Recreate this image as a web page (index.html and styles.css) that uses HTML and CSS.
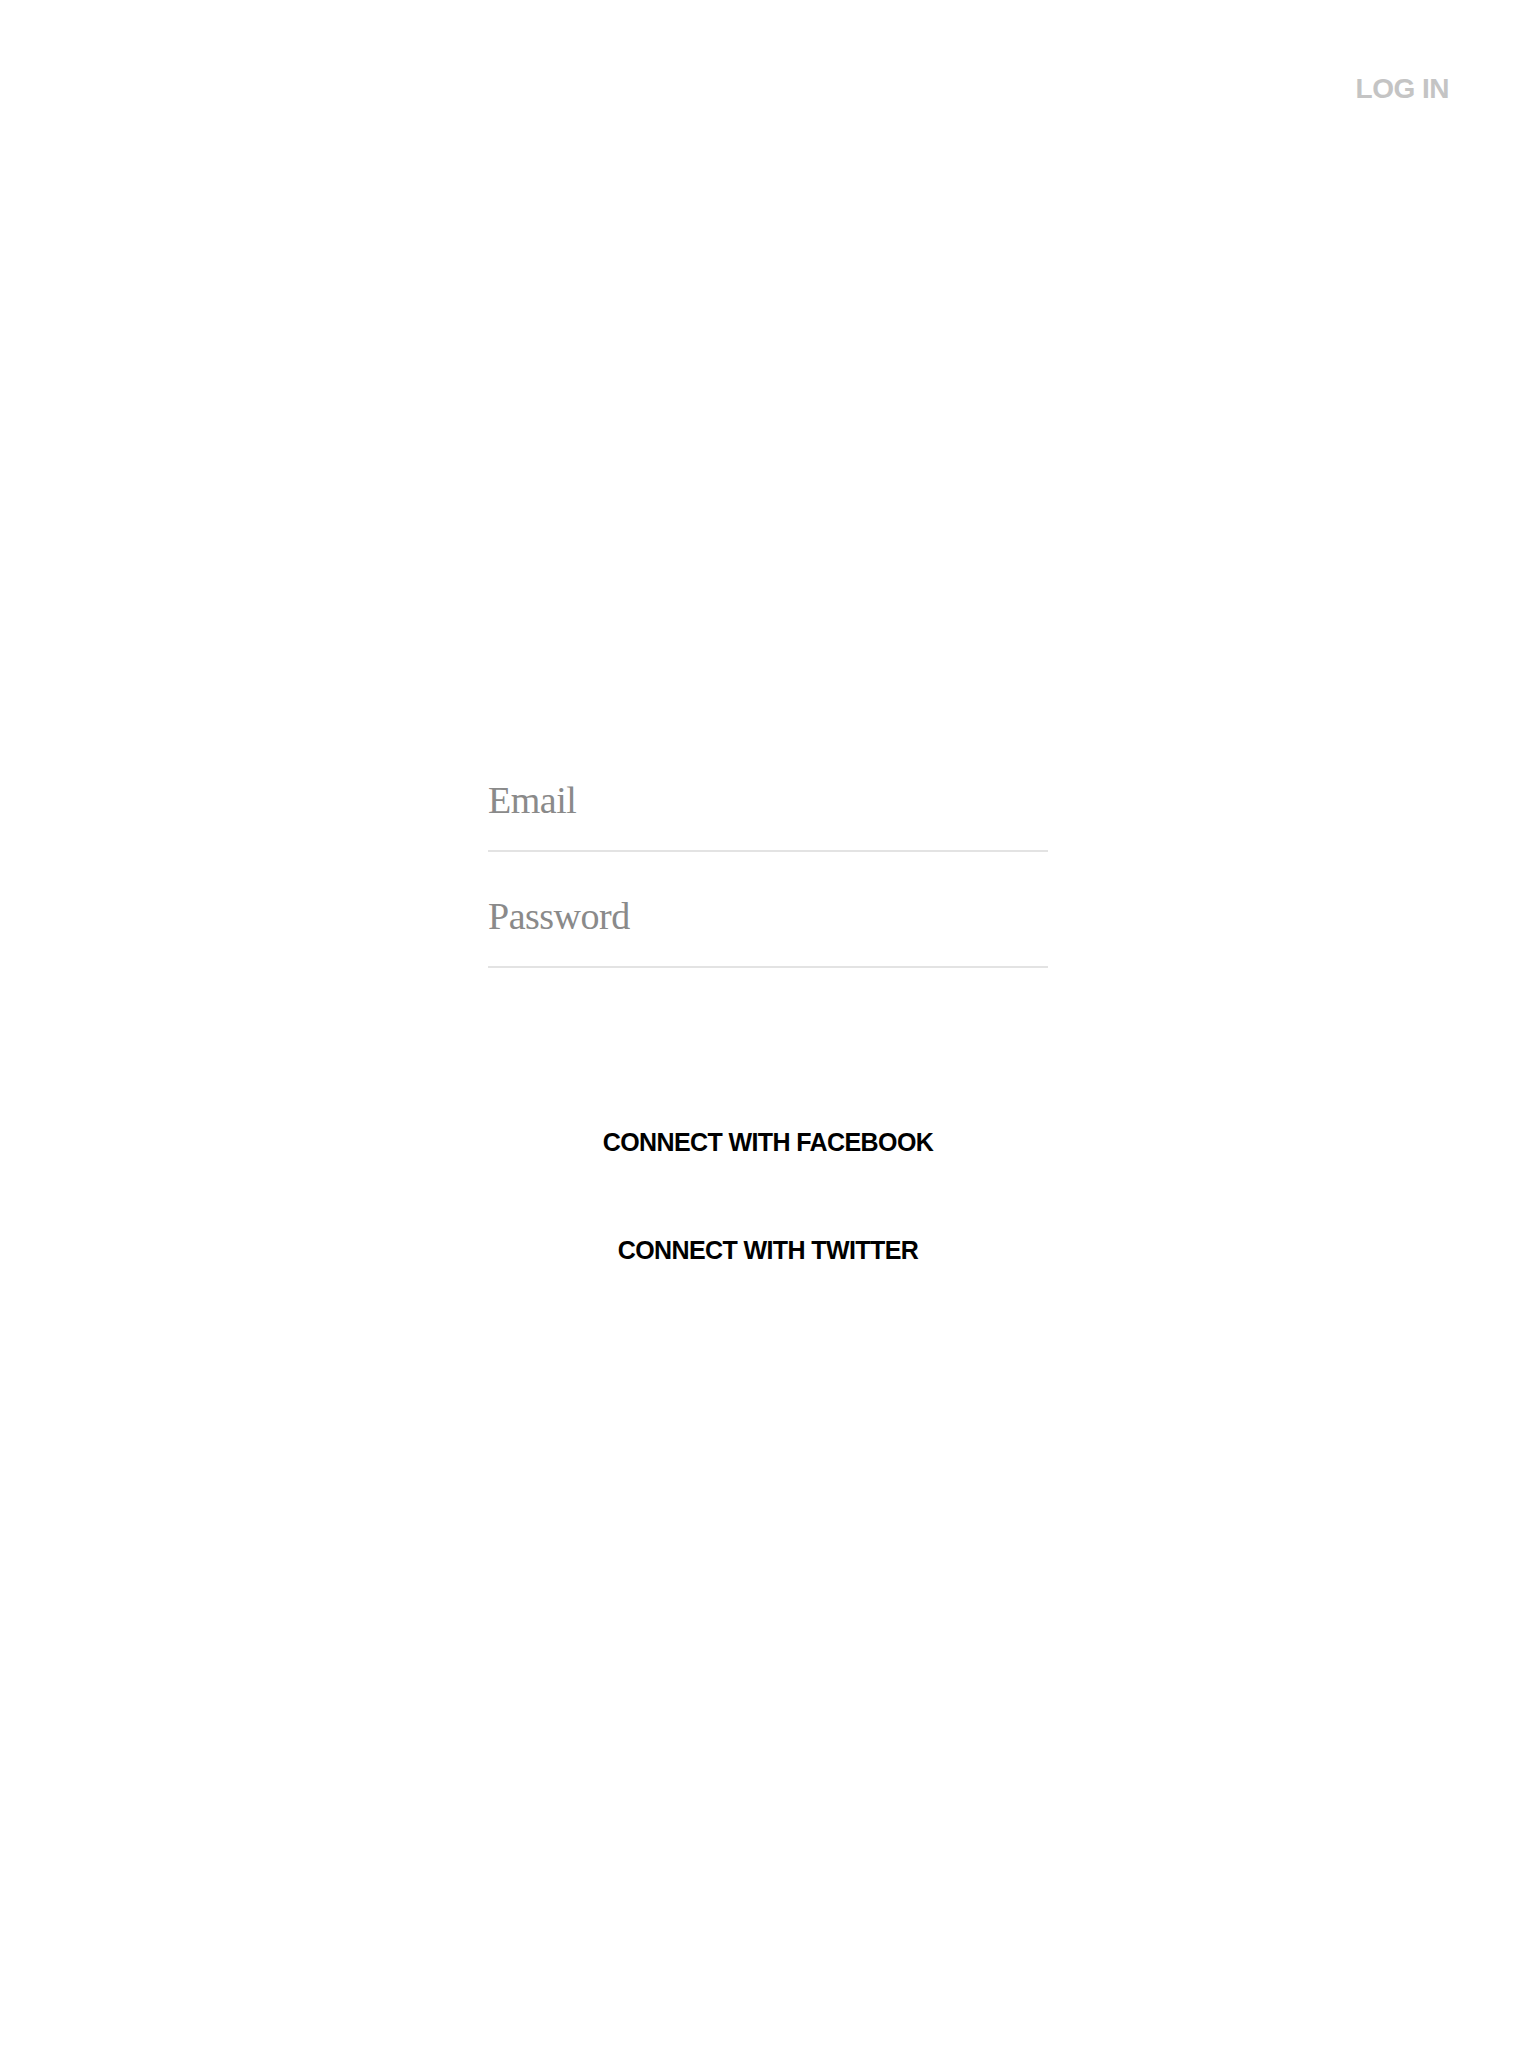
FILE: index.html
```html
<!DOCTYPE html>
<html lang="en">
<head>
<meta charset="utf-8">
<title>Log in</title>
<link rel="stylesheet" href="styles.css">
</head>
<body>
<header class="topbar">
  <a class="login-link" href="#">LOG IN</a>
</header>
<main class="content">
  <form class="login-form">
    <div class="field"><span class="placeholder">Email</span></div>
    <div class="field"><span class="placeholder">Password</span></div>
  </form>
  <nav class="social">
    <a class="social-link" href="#">CONNECT WITH FACEBOOK</a>
    <a class="social-link" href="#">CONNECT WITH TWITTER</a>
  </nav>
</main>
</body>
</html>
```
FILE: styles.css
```css
html, body {
  margin: 0;
  padding: 0;
  background: #ffffff;
}
body {
  width: 1536px;
  min-height: 2048px;
}
.topbar {
  display: flex;
  justify-content: flex-end;
  padding: 75px 87px 0 0;
}
.login-link {
  font-family: "Liberation Sans", Arial, sans-serif;
  font-weight: 700;
  font-size: 28px;
  line-height: 28px;
  letter-spacing: -0.5px;
  color: #c4c4c4;
  text-decoration: none;
}
.content {
  display: flex;
  flex-direction: column;
  align-items: center;
  margin-top: 633px;
}
.login-form {
  width: 560px;
  display: flex;
  flex-direction: column;
}
.field {
  padding: 45px 0 31px 0;
  border-bottom: 2px solid #e3e3e3;
  height: 38px;
}
.placeholder {
  display: block;
  font-family: "Liberation Serif", "Times New Roman", serif;
  font-size: 38px;
  line-height: 38px;
  letter-spacing: -0.5px;
  color: #8a8a8a;
}
.social {
  display: flex;
  flex-direction: column;
  align-items: center;
  gap: 83px;
  margin-top: 162px;
}
.social-link {
  font-family: "Liberation Sans", Arial, sans-serif;
  font-weight: 700;
  font-size: 25px;
  line-height: 25px;
  letter-spacing: -0.6px;
  color: #000000;
  text-decoration: none;
}
```
